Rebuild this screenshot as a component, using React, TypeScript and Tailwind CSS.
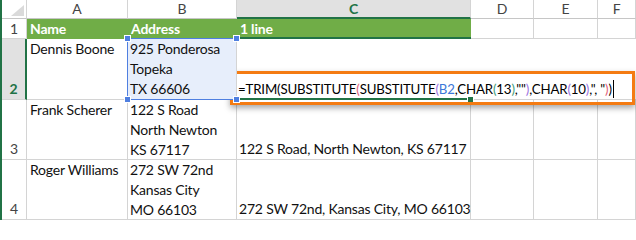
const grid = "border-r border-b border-[#d4d4d4]";
const green = "border-r border-b border-[#70ad47] bg-[#70ad47] px-[3px] font-bold text-white";
const colHead = `${grid} border-b-[#c6c6c6] flex items-center justify-center text-[14px] text-[#444]`;
const rowHead = `${grid} flex items-end justify-center text-[14px] text-[#444]`;

function Handle({ className }: { className: string }) {
  return <div className={`absolute h-[5px] w-[5px] bg-[#4f7fe0] ring-1 ring-white ${className}`} />;
}

function Formula() {
  const pink = "text-[#e2607c]";
  const purple = "text-[#9b72e2]";
  const teal = "text-[#3fa07e]";
  return (
    <span className="whitespace-nowrap text-[13.25px] tracking-[-0.15px]">
      =TRIM(SUBSTITUTE<span className={pink}>(</span>SUBSTITUTE<span className={purple}>(</span>
      <span className="text-[#3c78d8]">B2</span>,CHAR<span className={teal}>(</span>13<span className={teal}>)</span>,""
      <span className={purple}>)</span>,CHAR<span className={purple}>(</span>10<span className={purple}>)</span>,", "
      <span className={pink}>)</span>)
    </span>
  );
}

export default function App() {
  return (
    <div className="h-[220px] w-[636px] overflow-hidden border-l-2 border-[#217346] bg-white font-['Lato','Liberation_Sans',sans-serif] text-[14px] leading-5 tracking-[-0.2px] text-[#111]">
      <div className="grid h-full grid-cols-[25px_101px_109px_234px_63px_64px_1fr] grid-rows-[19px_20px_61px_60px_60px_1fr]">
        {/* header row */}
        <div className={`${grid} border-b-[#c6c6c6] relative`}>
          <svg className="absolute left-[9px] top-[5px]" width="13" height="11" viewBox="0 0 13 11">
            <path d="M13 0 L13 11 L0 11 Z" fill="#dadada" />
          </svg>
        </div>
        <div className={colHead}>A</div>
        <div className={colHead}>B</div>
        <div className="flex items-center justify-center border-r border-b-2 border-r-[#d4d4d4] border-b-[#217346] bg-[#e1e1e1] text-[14px] font-bold text-[#217346]">
          C
        </div>
        <div className={colHead}>D</div>
        <div className={colHead}>E</div>
        <div className={colHead}>F</div>

        {/* row 1 */}
        <div className={`${grid} flex items-center justify-center text-[14px] text-[#444]`}>1</div>
        <div className={green}>Name</div>
        <div className={green}>Address</div>
        <div className={green}>1 line</div>
        <div className={grid} />
        <div className={grid} />
        <div className={grid} />

        {/* row 2 */}
        <div className="flex items-end justify-center border-r-2 border-b border-r-[#217346] border-b-[#d4d4d4] bg-[#e1e1e1] text-[14px] font-bold text-[#217346]">
          2
        </div>
        <div className={`${grid} px-[3px]`}>Dennis Boone</div>
        <div className={`${grid} relative z-20 bg-[#e7eefb] px-[2px]`}>
          <div>925 Ponderosa</div>
          <div>Topeka</div>
          <div>TX 66606</div>
          <div className="pointer-events-none absolute -top-px -bottom-px -left-px right-0 border-y border-l border-[#4f7fe0]" />
          <Handle className="-left-[3px] -top-[3px]" />
          <Handle className="-right-[3px] -top-[3px]" />
          <Handle className="-bottom-[3px] -left-[3px]" />
          <Handle className="-bottom-[3px] -right-[3px]" />
        </div>
        <div className="relative z-10 col-span-4 flex items-end border-b border-[#d4d4d4] bg-white pl-px text-black">
          <div className="absolute -top-[2px] -bottom-px -left-[2px] w-[236px] border-y-2 border-l-2 border-[#217346]" />
          <div className="absolute -bottom-[3px] left-[231px] h-[5px] w-[5px] bg-[#217346] ring-1 ring-white" />
          <div className="flex h-5 items-center">
            <Formula />
            <span className="ml-px inline-block h-[18px] w-px bg-black" />
          </div>
          <div className="absolute -left-[7px] top-[32px] h-[34px] w-[405px] border-[3px] border-[#f47b12] shadow-[0_3px_6px_rgba(0,0,0,0.35)]" />
        </div>

        {/* row 3 */}
        <div className={rowHead}>3</div>
        <div className={`${grid} px-[3px]`}>Frank Scherer</div>
        <div className={`${grid} px-[2px]`}>
          <div>122 S Road</div>
          <div>North Newton</div>
          <div>KS 67117</div>
        </div>
        <div className={`${grid} flex items-end whitespace-nowrap px-[2px]`}>122 S Road, North Newton, KS 67117</div>
        <div className={grid} />
        <div className={grid} />
        <div className={grid} />

        {/* row 4 */}
        <div className={rowHead}>4</div>
        <div className={`${grid} whitespace-nowrap px-[3px]`}>Roger Williams</div>
        <div className={`${grid} px-[2px]`}>
          <div>272 SW 72nd</div>
          <div>Kansas City</div>
          <div>MO 66103</div>
        </div>
        <div className={`${grid} flex items-end whitespace-nowrap px-[2px]`}>272 SW 72nd, Kansas City, MO 66103</div>
        <div className={grid} />
        <div className={grid} />
        <div className={grid} />

        {/* row 5 */}
        <div className={grid} />
        <div className={grid} />
        <div className={grid} />
        <div className={grid} />
        <div className={grid} />
        <div className={grid} />
        <div className={grid} />
      </div>
    </div>
  );
}
